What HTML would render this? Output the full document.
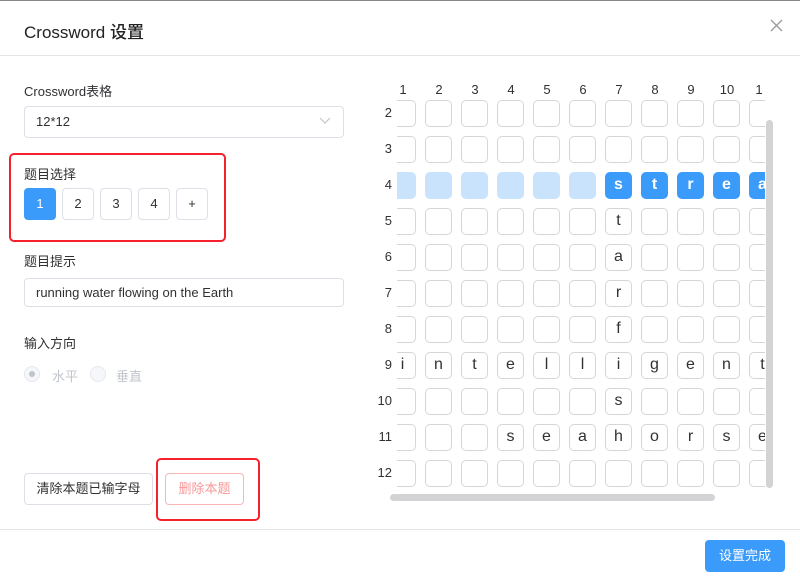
<!DOCTYPE html>
<html><head><meta charset="utf-8"><style>
*{box-sizing:border-box;margin:0;padding:0}
body{width:800px;height:582px;overflow:hidden;background:#fff;font-family:"Liberation Sans","Noto Sans CJK SC",sans-serif;color:#303133;position:relative}
.a{position:absolute}
.lbl{font-size:13px;color:#303133}
.box{border:1px solid #dcdfe6;border-radius:4px;background:#fff}
.btn{border:1px solid #dcdfe6;border-radius:4px;text-align:center;font-size:13px;background:#fff}
.red{border:2px solid #f5222d;border-radius:5px}
.wrap{left:397px;top:100px;width:368px;height:388px;overflow:hidden}
.grid{position:absolute;left:-8px;top:0;display:grid;grid-template-columns:repeat(11,27px);grid-auto-rows:27px;gap:9px}
.grid div{border:1.5px solid #d6d6d6;border-radius:5px;font-size:16px;text-align:center;line-height:24px;color:#303133}
.grid .l{background:#c9e3fc;border-color:#c9e3fc}
.grid .b{background:#3a9bfa;border-color:#3a9bfa;color:#fff;font-weight:bold}
.ch{font-size:13px;color:#303133;width:20px;text-align:center}
.rh{font-size:13px;color:#303133;width:20px;text-align:right;left:372px}
</style></head><body>
<div class="a" style="left:0;top:0;width:800px;height:1px;background:#888"></div>
<div class="a" style="left:24px;top:18px;font-size:17px;color:#222;font-weight:500">Crossword 设置</div>
<svg class="a" style="left:770px;top:19px" width="13" height="13"><path d="M1 1L12 12M12 1L1 12" stroke="#999" stroke-width="1.3" fill="none"/></svg>
<div class="a" style="left:0;top:55px;width:800px;height:1px;background:#e4e4e4"></div>

<div class="a lbl" style="left:24px;top:81px">Crossword表格</div>
<div class="a box" style="left:24px;top:106px;width:320px;height:32px"></div>
<div class="a" style="left:36px;top:114px;font-size:13px">12*12</div>
<svg class="a" style="left:319px;top:117px" width="12" height="8"><path d="M1 1L6 6L11 1" stroke="#c0c4cc" fill="none" stroke-width="1.2"/></svg>

<div class="a red" style="left:9px;top:153px;width:217px;height:89px"></div>
<div class="a lbl" style="left:24px;top:164px">题目选择</div>
<div class="a btn" style="left:24px;top:188px;width:32px;height:32px;background:#3a9bfa;border-color:#3a9bfa;color:#fff;line-height:30px">1</div>
<div class="a btn" style="left:62px;top:188px;width:32px;height:32px;line-height:30px">2</div>
<div class="a btn" style="left:100px;top:188px;width:32px;height:32px;line-height:30px">3</div>
<div class="a btn" style="left:138px;top:188px;width:32px;height:32px;line-height:30px">4</div>
<div class="a btn" style="left:176px;top:188px;width:32px;height:32px;line-height:30px">+</div>

<div class="a lbl" style="left:24px;top:251px">题目提示</div>
<div class="a box" style="left:24px;top:278px;width:320px;height:29px"></div>
<div class="a" style="left:36px;top:285px;font-size:13px">running water flowing on the Earth</div>

<div class="a lbl" style="left:24px;top:333px">输入方向</div>
<div class="a" style="left:24px;top:366px;width:16px;height:16px;border:1px solid #e4e7ed;border-radius:50%;background:#f5f7fa"></div>
<div class="a" style="left:29px;top:371px;width:6px;height:6px;border-radius:50%;background:#c0c4cc"></div>
<div class="a" style="left:52px;top:366px;font-size:13px;color:#c0c4cc">水平</div>
<div class="a" style="left:90px;top:366px;width:16px;height:16px;border:1px solid #e4e7ed;border-radius:50%;background:#f5f7fa"></div>
<div class="a" style="left:116px;top:366px;font-size:13px;color:#c0c4cc">垂直</div>

<div class="a btn" style="left:24px;top:473px;width:129px;height:32px;line-height:30px">清除本题已输字母</div>
<div class="a red" style="left:156px;top:458px;width:104px;height:63px"></div>
<div class="a btn" style="left:165px;top:473px;width:79px;height:32px;line-height:30px;color:#f89898;border-color:#fab6b6">删除本题</div>

<div class="a ch" style="left:393px;top:82px">1</div>
<div class="a ch" style="left:429px;top:82px">2</div>
<div class="a ch" style="left:465px;top:82px">3</div>
<div class="a ch" style="left:501px;top:82px">4</div>
<div class="a ch" style="left:537px;top:82px">5</div>
<div class="a ch" style="left:573px;top:82px">6</div>
<div class="a ch" style="left:609px;top:82px">7</div>
<div class="a ch" style="left:645px;top:82px">8</div>
<div class="a ch" style="left:681px;top:82px">9</div>
<div class="a ch" style="left:717px;top:82px">10</div>
<div class="a ch" style="left:749px;top:82px">1</div>

<div class="a rh" style="top:105px">2</div>
<div class="a rh" style="top:141px">3</div>
<div class="a rh" style="top:177px">4</div>
<div class="a rh" style="top:213px">5</div>
<div class="a rh" style="top:249px">6</div>
<div class="a rh" style="top:285px">7</div>
<div class="a rh" style="top:321px">8</div>
<div class="a rh" style="top:357px">9</div>
<div class="a rh" style="top:393px">10</div>
<div class="a rh" style="top:429px">11</div>
<div class="a rh" style="top:465px">12</div>

<div class="a wrap"><div class="grid">
<div></div><div></div><div></div><div></div><div></div><div></div><div></div><div></div><div></div><div></div><div></div>
<div></div><div></div><div></div><div></div><div></div><div></div><div></div><div></div><div></div><div></div><div></div>
<div class="l"></div><div class="l"></div><div class="l"></div><div class="l"></div><div class="l"></div><div class="l"></div><div class="b">s</div><div class="b">t</div><div class="b">r</div><div class="b">e</div><div class="b">a</div>
<div></div><div></div><div></div><div></div><div></div><div></div><div>t</div><div></div><div></div><div></div><div></div>
<div></div><div></div><div></div><div></div><div></div><div></div><div>a</div><div></div><div></div><div></div><div></div>
<div></div><div></div><div></div><div></div><div></div><div></div><div>r</div><div></div><div></div><div></div><div></div>
<div></div><div></div><div></div><div></div><div></div><div></div><div>f</div><div></div><div></div><div></div><div></div>
<div>i</div><div>n</div><div>t</div><div>e</div><div>l</div><div>l</div><div>i</div><div>g</div><div>e</div><div>n</div><div>t</div>
<div></div><div></div><div></div><div></div><div></div><div></div><div>s</div><div></div><div></div><div></div><div></div>
<div></div><div></div><div></div><div>s</div><div>e</div><div>a</div><div>h</div><div>o</div><div>r</div><div>s</div><div>e</div>
<div></div><div></div><div></div><div></div><div></div><div></div><div></div><div></div><div></div><div></div><div></div>
</div></div>
<div class="a" style="left:766px;top:120px;width:7px;height:368px;border-radius:4px;background:#d3d3d6"></div>
<div class="a" style="left:390px;top:494px;width:325px;height:7px;border-radius:4px;background:#d3d3d6"></div>

<div class="a" style="left:0;top:529px;width:800px;height:1px;background:#e4e4e4"></div>
<div class="a btn" style="left:705px;top:540px;width:80px;height:32px;line-height:32px;background:#3a9bfa;border:none;color:#fff">设置完成</div>
</body></html>
